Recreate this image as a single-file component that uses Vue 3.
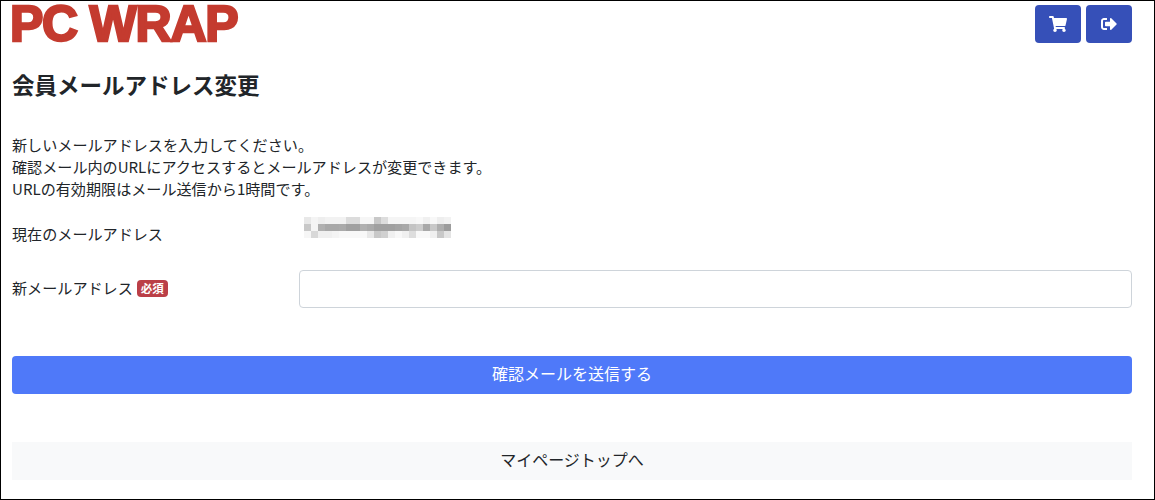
<script setup>
const rows = [
  ['e8','f4','ee','f2','f2','f2','dc','dc','f6','f6','c8','dd','f5','f5','f5','f5','f8','f0','f8','ee','f2'],
  ['c8','f4','b0','a8','a8','aa','a0','a0','b0','aa','a0','a0','a0','a4','a8','c4','cc','a8','c8','ae','9c'],
  ['f6','d8','f0','f0','f4','f8','f8','f8','f8','e8','c8','d0','f0','f8','f0','dd','f8','f8','f0','c8','e4']
]
const cells = rows.flat().map((v) => `#${v}${v}${v}`)
</script>

<template>
  <div class="page">
    <header class="top">
      <div class="logo">PC WRAP</div>
      <div class="actions">
        <button class="icon-btn" aria-label="cart">
          <svg width="18" height="16" viewBox="0 0 576 512"><path fill="currentColor" d="M528.12 301.319l47.273-208C578.806 78.301 567.391 64 551.99 64H159.208l-9.166-44.81C147.758 8.021 137.93 0 126.529 0H24C10.745 0 0 10.745 0 24v16c0 13.255 10.745 24 24 24h69.883l70.248 343.435C147.325 417.1 136 435.222 136 456c0 30.928 25.072 56 56 56s56-25.072 56-56c0-15.674-6.447-29.835-16.824-40h209.647C430.447 426.165 424 440.326 424 456c0 30.928 25.072 56 56 56s56-25.072 56-56c0-22.172-12.888-41.332-31.579-50.405l5.517-24.276c3.413-15.018-8.002-29.319-23.403-29.319H218.117l-6.545-32h293.145c11.206 0 20.92-7.754 23.403-18.681z"/></svg>
        </button>
        <button class="icon-btn" aria-label="logout">
          <svg width="16" height="16" viewBox="0 0 512 512"><path fill="currentColor" d="M497 273L329 441c-15 15-41 4.5-41-17v-96H152c-13.3 0-24-10.7-24-24v-96c0-13.3 10.7-24 24-24h136V88c0-21.4 25.9-32 41-17l168 168c9.3 9.4 9.3 24.6 0 34zM192 436v-40c0-6.6-5.4-12-12-12H96c-17.7 0-32-14.3-32-32V160c0-17.7 14.3-32 32-32h84c6.6 0 12-5.4 12-12V76c0-6.6-5.4-12-12-12H96c-53 0-96 43-96 96v192c0 53 43 96 96 96h84c6.6 0 12-5.4 12-12z"/></svg>
        </button>
      </div>
    </header>

    <h1 class="title">会員メールアドレス変更</h1>

    <p class="intro">
      新しいメールアドレスを入力してください。<br>
      確認メール内のURLにアクセスするとメールアドレスが変更できます。<br>
      URLの有効期限はメール送信から1時間です。
    </p>

    <div class="row current">
      <div class="label">現在のメールアドレス</div>
      <div class="mosaic">
        <i v-for="(c, i) in cells" :key="i" :style="{ background: c }"></i>
      </div>
    </div>

    <div class="row fresh">
      <div class="label label-new">新メールアドレス<span class="badge">必須</span></div>
      <input class="field" type="text" />
    </div>

    <button class="submit">確認メールを送信する</button>
    <button class="back">マイページトップへ</button>
  </div>
</template>

<style>
html, body { margin: 0; background: #fff; }
</style>

<style scoped>
.page {
  box-sizing: border-box;
  width: 1155px;
  height: 500px;
  border: 1px solid #000;
  padding: 4px 22px 0 11px;
  font-family: "Noto Sans CJK JP", "Noto Sans", sans-serif;
  font-size: 15.1px;
  line-height: 22px;
  color: #212529;
}
.top {
  display: flex;
  justify-content: space-between;
  height: 38px;
}
.logo {
  margin-left: -2px;
  font-family: "Liberation Sans", Arial, sans-serif;
  font-weight: 700;
  font-size: 50px;
  line-height: 39px;
  letter-spacing: -1.25px;
  color: #c43b2f;
  -webkit-text-stroke: 2.4px #c43b2f;
  white-space: nowrap;
}
.actions { display: flex; gap: 5px; }
.icon-btn {
  width: 46px;
  height: 38px;
  padding: 0;
  border: 0;
  border-radius: 4px;
  background: #3650b8;
  color: #fff;
  display: flex;
  align-items: center;
  justify-content: center;
}
.title {
  margin: 25px 0 0;
  font-size: 22.5px;
  line-height: 33.6px;
  font-weight: 700;
}
.intro { margin: 31px 0 0; }
.row { display: flex; align-items: center; }
.label { width: 287px; flex: none; display: flex; align-items: center; }
.label-new { padding-bottom: 4px; }
.current { margin-top: 22px; height: 24px; }
.mosaic {
  margin-left: 5px;
  margin-top: -11px;
  display: grid;
  grid-template-columns: repeat(21, 7px);
  grid-auto-rows: 7px;
}
.mosaic i { display: block; }
.fresh { margin-top: 25px; }
.badge {
  margin-left: 4px;
  margin-top: 4px;
  padding: 0 4px;
  height: 17px;
  line-height: 16px;
  border-radius: 4px;
  background: #bb3f47;
  color: #fff;
  font-size: 11.5px;
  font-weight: 700;
}
.field {
  box-sizing: border-box;
  flex: 1;
  height: 38px;
  border: 1px solid #ced4da;
  border-radius: 4px;
  background: #fff;
}
button.submit, button.back {
  display: block;
  width: 100%;
  border: 0;
  font-family: inherit;
  font-size: 16px;
  line-height: 24px;
  padding: 5px 12px 9px;
  height: 38px;
}
.submit {
  margin-top: 48px;
  background: #4f79f9;
  color: #fff;
  border-radius: 4px;
}
.back {
  margin-top: 48px;
  background: #f8f9fa;
  color: #212529;
}
</style>
